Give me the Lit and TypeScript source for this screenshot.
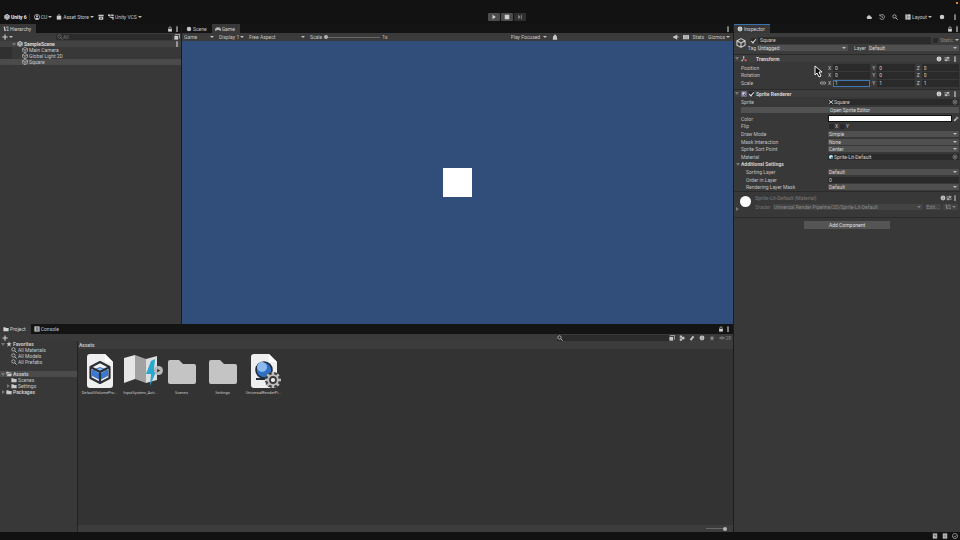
import { LitElement, html, css, svg, nothing, TemplateResult, SVGTemplateResult } from "lit";
import { customElement } from "lit/decorators.js";
import { classMap } from "lit/directives/class-map.js";

const glyphs: Record<string, SVGTemplateResult> = {
  unity: svg`<path d="M8 0 15 4v8l-7 4-7-4V4z" fill="currentColor"/><path d="M8 8V15M8 8 2 4.600M8 8l6-3.400M5 3l3 2 3-2M3 9v3l3 1M13 9v3l-3 1" stroke="#222" stroke-width="1.300" fill="none"/>`,
  user: svg`<circle cx="8" cy="8" r="7" fill="none" stroke="currentColor" stroke-width="1.800"/><circle cx="8" cy="6" r="2.800" fill="currentColor"/><path d="M3 13c1-4 9-4 10 0-2 2.500-8 2.500-10 0z" fill="currentColor"/>`,
  bag: svg`<path d="M2 5h12v10H2z" fill="currentColor"/><path d="M5 6V3q3-3 6 0v3" fill="none" stroke="currentColor" stroke-width="1.800"/>`,
  box: svg`<path d="M1 2h14v4H1zM2 7h12v8H2z" fill="currentColor"/><path d="M8 8v5M5.500 10.500 8 13l2.500-2.500" stroke="#222" stroke-width="1.400" fill="none"/>`,
  branch: svg`<path d="M1 3h9M5 3v6h6" stroke="currentColor" stroke-width="2" fill="none"/><path d="M0 1h5v4H0zM9 1h6v4H9zM9 7h6v8h-3v-4H9z" fill="currentColor"/>`,
  cloud: svg`<path d="M4 13a4 4 0 0 1 0-7 5 5 0 0 1 9 1 3 3 0 0 1 0 6z" fill="currentColor"/>`,
  history: svg`<path d="M3 4a6.500 6.500 0 1 1-1 6M2 1v4h4M8 5v4h3" fill="none" stroke="currentColor" stroke-width="1.800"/>`,
  search: svg`<circle cx="6.500" cy="6.500" r="4.500" fill="none" stroke="currentColor" stroke-width="2"/><path d="m10 10 5 5" stroke="currentColor" stroke-width="2.400"/>`,
  layout: svg`<path d="M1 1h14v14H1z" fill="currentColor"/><path d="M6 1v14M6 8h9" stroke="#333" stroke-width="1.200"/>`,
  dot: svg`<circle cx="8" cy="8" r="6" fill="currentColor"/>`,
  bulb: svg`<path d="M3 6q0-1 2-1V3q3-3 6 0v2q2 0 2 1l1 9H2z" fill="currentColor"/>`,
  kebab: svg`<path d="M6 1h4v3.500H6zM6 6.300h4v3.500H6zM6 11.600h4V15H6z" fill="currentColor"/>`,
  lock: svg`<path d="M3 8h10v7H3z" fill="currentColor"/><path d="M5 8V4q3-4 6 0v4" fill="none" stroke="currentColor" stroke-width="2"/>`,
  tree: svg`<path d="M1 3h5M8 3h7M4 3v9h4M10 8h5M10 12h5M4 8h4" stroke="currentColor" stroke-width="2.200" fill="none"/>`,
  plus: svg`<path d="M8 1v14M1 8h14" stroke="currentColor" stroke-width="3"/>`,
  pad: svg`<path d="M4 4h8c3 0 4 8 2.500 9S12 11 11 10H5c-1 1-2 4-3.500 3S1 4 4 4z" fill="currentColor"/><circle cx="5" cy="7" r="1.200" fill="#333"/><circle cx="11" cy="7" r="1.200" fill="#333"/>`,
  cube: svg`<path d="M8 1 14.500 4.500v7L8 15l-6.500-3.500v-7zM1.500 4.500 8 8l6.500-3.500M8 8v7" fill="none" stroke="currentColor" stroke-width="1.700" stroke-linejoin="round"/>`,
  play: svg`<path d="M4 2l9 6-9 6z" fill="currentColor"/>`,
  stop: svg`<path d="M2 2h12v12H2z" fill="currentColor"/>`,
  step: svg`<path d="M3 2l7 6-7 6zM11 2h2v12h-2z" fill="currentColor"/>`,
  mute: svg`<path d="M1 5h4l6-4v14l-6-4H1z" fill="currentColor"/><path d="M13 5v6" stroke="currentColor" stroke-width="2"/>`,
  keys: svg`<path d="M0 3h16v11H0z" fill="currentColor"/><path d="M2 6h12M2 9h12M4 12h8" stroke="#555" stroke-width="1" stroke-dasharray="2 1"/>`,
  info: svg`<circle cx="8" cy="8" r="6.500" fill="currentColor"/><path d="M8 4v2M8 7.500V12" stroke="#444" stroke-width="1.400"/>`,
  presets: svg`<path d="M1 5h14M1 11h14" stroke="currentColor" stroke-width="2"/><path d="M9 2h3v6H9zM4 8h3v6H4z" fill="currentColor"/>`,
  axes: svg`<path d="M7 2v7" stroke="#bbb" stroke-width="2"/><path d="m7 9-5 4" stroke="#6bd" stroke-width="2"/><path d="m7 9 6 3" stroke="#e65" stroke-width="2"/><path d="M5 1h4v4H5z" fill="#ccc"/><path d="M11 9h4v5h-4z" fill="#e65"/><path d="M1 10h4v4H1z" fill="#bbb"/>`,
  sprite: svg`<path d="M1 1h14v14H1z" fill="#8d86a8"/><path d="M4 4h5v5H4z" fill="#ddd"/><path d="m8 8 5 5" stroke="#334" stroke-width="2"/>`,
  link: svg`<path d="M7 5H4a3 3 0 0 0 0 6h3M9 5h3a3 3 0 0 1 0 6H9M5 8h6" fill="none" stroke="currentColor" stroke-width="2"/>`,
  target: svg`<circle cx="8" cy="8" r="5.500" fill="none" stroke="#8a8a8a" stroke-width="2"/><circle cx="8" cy="8" r="2.500" fill="#8a8a8a"/>`,
  dropper: svg`<path d="m2 14 1-4 5-5 3 3-5 5zM8 3l2-2 5 5-2 2z" fill="currentColor"/>`,
  cross: svg`<path d="m2 3 12 10M14 3 2 13" stroke="currentColor" stroke-width="2.500"/>`,
  ball: svg`<circle cx="8" cy="8" r="5.500" fill="#bfe4ea"/><path d="M8 8h5v5H8z" fill="#4a7f90"/>`,
  star: svg`<path d="m8 1 2 5h5l-4 3.500 1.500 5.500L8 12l-4.500 3L5 9.500 1 6h5z" fill="currentColor"/>`,
  folder: svg`<path d="M1 3h5l2 2h7v9H1z" fill="currentColor"/>`,
  folderOpen: svg`<path d="M1 2h5l2 2h6v2H4L1 12z" fill="currentColor"/><path d="M4.500 7H16l-2.500 7H2z" fill="currentColor"/>`,
  console: svg`<path d="M1 1h14v14H1z" fill="currentColor"/><path d="M5 5h7M5 8h7M5 11h7" stroke="#222" stroke-width="1.500"/>`,
  tag: svg`<path d="M2 12 10 2l4 3-8 10z" fill="currentColor"/>`,
  shapes: svg`<path d="M2 1h6v6H2zM2 9h6v6H2z" fill="currentColor"/><circle cx="11" cy="8" r="4" fill="currentColor"/>`,
  save: svg`<path d="M1 5h10v10H1z" fill="currentColor"/><path d="M4 3V1h11v10h-2" fill="none" stroke="currentColor" stroke-width="2"/>`,
  eye: svg`<path d="M1 8q7-7 14 0-7 7-14 0z" fill="none" stroke="currentColor" stroke-width="2"/><circle cx="8" cy="8" r="2" fill="currentColor"/>`,
  bug: svg`<path d="M2 1h12v14H2z" fill="currentColor"/><path d="m4 4 8 8M10 4v4" stroke="#444" stroke-width="1.600"/>`,
  stack: svg`<path d="M2 1h12v14H2z" fill="currentColor"/><path d="M5 6h6M5 10h6" stroke="#666" stroke-width="1.500"/>`,
  ring: svg`<circle cx="8" cy="8" r="6.800" fill="none" stroke="currentColor" stroke-width="1.800"/><path d="m4.500 8 3 3 4-5" fill="none" stroke="currentColor" stroke-width="1.800"/>`,
};

const icon = (name: string, cls = "") =>
  html`<svg class="ic ${cls}" viewBox="0 0 16 16" aria-hidden="true">${glyphs[name]}</svg>`;

const page = svg`<path d="M6 1h16l8 8v23q0 3-3 3H7q-3 0-3-3V4q0-3 3-3z" fill="#efefef"/><path d="M22 1v8h8z" fill="#fff"/>`;
const gear = (fill: string, w: number, r: number) =>
  svg`<path d="M26 19v16M18 27h16M20.300 21.300l11.400 11.400M31.700 21.300 20.300 32.700" stroke=${fill} stroke-width=${w} stroke-linecap="butt"/><circle cx="26" cy="27" r=${r} fill=${fill}/>`;
const art: Record<string, SVGTemplateResult> = {
  volume: svg`${page}<path d="m17 14 8 3v6l-8 4-8-4v-6z" fill="#3b78cf"/><path d="m17 15 6 2.500L17 21l-6-3.500z" fill="#8fbcf0"/><path d="m17 9 9.500 5v11L17 30l-9.500-5V14zM7.500 14l9.500 5 9.500-5M17 19v11" fill="none" stroke="#2b2f36" stroke-width="2.200" stroke-linejoin="round"/>`,
  input: svg`<path d="M0 5 11 2v24L0 30z" fill="#e6e6e6"/><path d="m11 2 11 4v24l-11-4z" fill="#a2a2a2"/><path d="m22 6 11-3v24l-11 3z" fill="#dedede"/><path d="m27 8 4-2-1 10h3l-7 17 1-12h-5z" fill="#27a9cf"/>`,
  folder: svg`<path d="M3 9q0-2 2-2h9l4 4h11q2 0 2 2v16q0 2-2 2H5q-2 0-2-2z" fill="#c4c4c4"/>`,
  render: svg`${page}<circle cx="17" cy="17" r="8" fill="#2f6fc4" stroke="#222b38" stroke-width="1.600"/><circle cx="15" cy="14" r="5" fill="#8cb9ee"/><path d="M9 26h10" stroke="#222b38" stroke-width="2"/>${gear("#3a3a3a", 5, 7.500)}${gear("#bdbdbd", 2.600, 5.800)}<circle cx="26" cy="27" r="3" fill="#eee" stroke="#3a3a3a" stroke-width="1.800"/>`,
};

const shared = css`
  :host { display: block; min-width: 0; min-height: 0; box-sizing: border-box; }
  * { box-sizing: border-box; }
  .ic { width: 6px; height: 6px; flex: none; display: block; }
  .ic.big { width: 10px; height: 10px; }
  button, input, select { font: inherit; color: inherit; margin: 0; padding: 0; border: 0; background: none; border-radius: 0; outline: none; min-width: 0; }
  button { display: flex; align-items: center; gap: 1px; white-space: nowrap; }
  select { appearance: none; width: 100%; height: 100%; }
  input[type="checkbox"] { appearance: none; width: 5px; height: 5px; background: #2a2a2a; flex: none; display: grid; place-items: center; }
  input[type="checkbox"]:checked::after { content: ""; width: 2px; height: 4px; border: solid #e4e4e4; border-width: 0 1px 1px 0; transform: rotate(40deg); }
  input[type="range"] { appearance: none; height: 5px; background: linear-gradient(#666, #666) center / 100% 1px no-repeat; }
  input[type="range"]::-webkit-slider-thumb { appearance: none; width: 4px; height: 4px; border-radius: 50%; background: #b4b4b4; }
  .caret::after { content: ""; flex: none; border: solid transparent; border-width: 2px 2px 0; border-top-color: #bdbdbd; }
  .pick { display: flex; align-items: center; position: relative; min-width: 0; }
  .pick::after { position: absolute; right: 2px; pointer-events: none; }
  .tabs { display: flex; height: 9px; flex: none; background: #141414; align-items: stretch; }
  .tab { padding: 0 5px 0 3px; gap: 1px; color: #c4c4c4; }
  .tab.on { background: #383838; color: #d2d2d2; }
  .bar { display: flex; height: 8px; flex: none; background: #3a3a3a; align-items: center; }
  .end { margin-left: auto; display: flex; align-items: center; gap: 1px; }
  .fold { width: 4px; flex: none; display: grid; place-items: center; }
  .fold::before { content: ""; border: solid transparent; border-width: 3px 2px 0; border-top-color: #777; }
  .fold.shut::before { border-width: 2px 0 2px 3px; border-color: transparent transparent transparent #777; }
  .fold.none::before { display: none; }
  .row { display: flex; align-items: center; height: 6px; gap: 1px; white-space: nowrap; }
  .row.strong { font-weight: 700; }
  .row.lit { background: #4b4b4b; }
`;

@customElement("tool-bar")
class ToolBar extends LitElement {
  static styles = [shared, css`
    :host { height: 24px; background: #121212; flex: none; }
    .top { display: grid; grid-template-columns: 1fr auto 1fr; align-items: end; height: 24px; padding: 0 2px 3px 4px; position: relative; }
    .side { display: flex; align-items: center; height: 8px; color: #cacaca; }
    .side button { margin-right: 4px; }
    .brand { font-weight: 700; color: #f0f0f0; border-right: 1px solid #333; padding-right: 2px; }
    .right { justify-content: flex-end; }
    .side.right button { margin: 0 0 0 7px; }
    .run { display: flex; gap: 1px; margin-left: 51px; }
    .run button { width: 12px; height: 8px; background: #4c4c4c; justify-content: center; border-radius: 1px; color: #d0d0d0; }
    .run button:last-child { background: #2f2f2f; color: #888; }
    .rec { position: absolute; right: 2px; top: 2px; width: 2px; height: 2px; background: #e08a2c; }
  `];
  render() {
    return html`<header class="top">
      <div class="side">
        <button class="brand">${icon("unity")}Unity 6</button>
        <button class="caret">${icon("user")}CU</button>
        <button class="caret">${icon("bag")}Asset Store</button>
        <button aria-label="Package manager">${icon("box")}</button>
        <button class="caret">${icon("branch")}Unity VCS</button>
      </div>
      <div class="run">
        <button aria-label="Play">${icon("play")}</button>
        <button aria-label="Stop">${icon("stop")}</button>
        <button aria-label="Step">${icon("step")}</button>
      </div>
      <div class="side right">
        <button aria-label="Cloud">${icon("cloud")}</button>
        <button aria-label="History">${icon("history")}</button>
        <button aria-label="Search">${icon("search")}</button>
        <button class="caret">${icon("layout")}Layout</button>
        <button aria-label="Account">${icon("dot")}</button>
        <button aria-label="More">${icon("kebab")}</button>
      </div>
      <span class="rec"></span>
    </header>`;
  }
}

@customElement("hierarchy-panel")
class HierarchyPanel extends LitElement {
  static styles = [shared, css`
    :host { background: #383838; border-right: 1px solid #1a1a1a; }
    .tabs .end, .scene .end { padding-right: 1px; }
    .bar { padding: 0 1px 0 2px; gap: 2px; }
    .find { display: flex; align-items: center; flex: 1; height: 6px; margin-left: 41px; background: #2b2b2b; color: #777; padding-left: 1px; border-radius: 2px; }
    .find input { flex: 1; }
    .find input::placeholder { color: #777; }
    .gutter { background: linear-gradient(90deg, #303030 12px, transparent 12px); }
    .row { padding-left: 22px; color: #c8c8c8; }
    .row.scene { padding-left: 12px; background: #424242; color: #dadada; }
  `];
  render() {
    return html`
      <div class="tabs"><button class="tab on">${icon("tree")}Hierarchy</button>
        <span class="end">${icon("lock")}${icon("kebab")}</span></div>
      <div class="bar"><button class="caret" aria-label="Create">${icon("plus")}</button>
        <label class="find">${icon("search")}<input placeholder="All" aria-label="Search hierarchy" /></label>${icon("save")}</div>
      <div class="gutter">
        <div class="row strong scene"><span class="fold"></span>${icon("unity")}SampleScene<span class="end">${icon("kebab")}</span></div>
        ${["Main Camera", "Global Light 2D", "Square"].map(
          (n) => html`<div class=${classMap({ row: true, lit: n === "Square" })}>${icon("cube")}${n}</div>`)}
      </div>`;
  }
}

@customElement("game-panel")
class GamePanel extends LitElement {
  static styles = [shared, css`
    :host { display: flex; flex-direction: column; }
    .tabs { padding-left: 1px; }
    .tabs .end { padding-right: 2px; }
    .bar { color: #c6c6c6; padding: 0 3px 0 2px; }
    .bar .pick { margin-right: 3px; }
    .w1 { width: 32px; } .w2 { width: 27px; } .w3 { width: 58px; } .w4 { width: 38px; }
    .scale { display: flex; align-items: center; gap: 2px; }
    .scale input { width: 56px; }
    .end { gap: 4px; }
    .focus { display: flex; align-items: center; margin-left: auto; margin-right: 115px; }
    .bar .end { margin-left: 0; }
    .view { flex: 1; background: #314d79; display: grid; place-items: center; }
    .square { width: 29px; height: 29px; background: #fff; }
  `];
  private pick(cls: string, text: string) {
    return html`<span class="pick caret ${cls}"><select aria-label=${text}><option>${text}</option></select></span>`;
  }
  render() {
    return html`
      <div class="tabs"><button class="tab">${icon("dot")}Scene</button><button class="tab on">${icon("pad")}Game</button>
        <span class="end">${icon("kebab")}</span></div>
      <div class="bar">
        ${this.pick("w1", "Game")}${this.pick("w2", "Display 1")}${this.pick("w3", "Free Aspect")}
        <label class="scale">Scale<input type="range" value="0" />1x</label>
        <span class="focus">${this.pick("w4", "Play Focused")}${icon("bulb")}</span>
        <span class="end">${icon("mute")}${icon("keys")}<button>Stats</button><button class="caret">Gizmos</button></span>
      </div>
      <div class="view"><div class="square"></div></div>`;
  }
}

@customElement("project-panel")
class ProjectPanel extends LitElement {
  static styles = [shared, css`
    :host { display: flex; flex-direction: column; background: #383838; }
    .tabs { height: 10px; }
    .tabs .end { padding-right: 2px; }
    .bar { padding: 0 2px; height: 7px; }
    .find { display: flex; align-items: center; width: 112px; height: 6px; background: #2b2b2b; margin-left: auto; }
    .find input { flex: 1; }
    .tools { display: flex; gap: 4px; align-items: center; color: #c4c4c4; }
    .dim { color: #888; display: flex; align-items: center; }
    .body { display: flex; flex: 1; min-height: 0; }
    .side { width: 78px; flex: none; border-right: 1px solid #232323; }
    .side .row { color: #c8c8c8; padding-left: 1px; }
    .side .in1 { padding-left: 6px; }
    .side .gap { margin-top: 6px; }
    .main { flex: 1; display: flex; flex-direction: column; background: #333; min-width: 0; }
    .crumb { height: 8px; background: #3c3c3c; padding-left: 1px; font-weight: 700; color: #c4c4c4; line-height: 9px; }
    .tiles { display: flex; flex: 1; padding: 4px 0 0 1px; }
    .tile { width: 41px; text-align: center; position: relative; font-size: 4px; line-height: 7px; color: #c8c8c8; white-space: nowrap; }
    .tile svg { width: 34px; height: 36px; display: block; margin: 0 auto; }
    .more { position: absolute; left: 34px; top: 13px; width: 9px; height: 9px; border-radius: 50%; background: #b8b8b8; color: #2c2c2c; display: grid; place-items: center; }
    .tile .more svg { width: 5px; height: 5px; }
    .zoom { display: flex; justify-content: flex-end; height: 7px; background: #3c3c3c; padding: 1px 6px; }
    .zoom input { width: 21px; }
  `];
  private item(cls: string, fold: string, ic: string, text: string) {
    return html`<div class="row ${cls}"><span class="fold ${fold}"></span>${icon(ic)}${text}</div>`;
  }
  render() {
    const tiles: [string, string][] = [["volume", "DefaultVolumePro..."], ["input", "InputSystem_Acti..."], ["folder", "Scenes"], ["folder", "Settings"], ["render", "UniversalRenderPi..."]];
    return html`
      <div class="tabs"><button class="tab on">${icon("folder")}Project</button><button class="tab">${icon("console")}Console</button>
        <span class="end">${icon("lock")}${icon("kebab")}</span></div>
      <div class="bar"><button aria-label="Create">${icon("plus")}</button>
        <label class="find">${icon("search")}<input aria-label="Search project" /></label>
        <span class="tools">${icon("save")}${icon("shapes")}${icon("tag")}${icon("info")}<span class="dim">${icon("star")}</span><span class="dim">${icon("eye")}28</span></span></div>
      <div class="body">
        <nav class="side">
          ${this.item("strong", "", "star", "Favorites")}
          ${["All Materials", "All Models", "All Prefabs"].map((t) => this.item("in1", "none", "search", t))}
          ${this.item("strong lit gap", "", "folderOpen", "Assets")}
          ${this.item("in1", "none", "folder", "Scenes")}
          ${this.item("in1", "shut", "folder", "Settings")}
          ${this.item("strong", "shut", "folder", "Packages")}
        </nav>
        <section class="main">
          <div class="crumb">Assets</div>
          <div class="tiles">${tiles.map(([a, t]) => html`<div class="tile">
            <svg viewBox="0 0 34 36" aria-hidden="true">${art[a]}</svg>${t}
            ${a === "input" ? html`<button class="more" aria-label="Expand">${icon("play")}</button>` : nothing}</div>`)}</div>
          <div class="zoom"><input type="range" value="100" aria-label="Icon size" /></div>
        </section>
      </div>`;
  }
}

@customElement("inspector-panel")
class InspectorPanel extends LitElement {
  static styles = [shared, css`
    :host { background: #383838; border-left: 1px solid #1c1c1c; position: relative; }
    .tab.on { border-top: 1px solid #3a72b0; }
    .tabs .end { gap: 1px; }
    .end { gap: 2px; }
    .object { display: flex; gap: 1px; padding: 3px 1px 1px 2px; height: 21px; background: #3c3c3c; }
    .object > .ic { margin-top: 2px; }
    .lines { flex: 1; display: grid; grid-template-rows: 8px 8px; }
    .line { display: flex; align-items: center; gap: 1px; }
    .line .tagl { width: 9px; text-align: right; }
    .line .lay { width: 18px; padding-left: 5px; }
    .line .sel { flex: 1; }
    .who { padding-left: 4px; gap: 2px; }
    .name { flex: 1; height: 7px; background: #2b2b2b; padding-left: 2px; }
    .dim { color: #8a8a8a; display: flex; align-items: center; gap: 2px; }
    .head { display: flex; align-items: center; height: 8px; gap: 2px; padding: 0 2px 0 1px; background: #3e3e3e; border-top: 1px solid #2a2a2a; font-weight: 700; color: #d6d6d6; }
    .head .chk { width: 5px; display: flex; }
    .props { display: grid; grid-auto-rows: 1fr; padding: 0 1px 0 7px; color: #c0c0c0; }
    .xform { height: 23px; margin: 2px 0; }
    .top { height: 16px; margin-top: 1px; }
    .rest { height: 76px; margin-top: 1px; }
    .prop { display: grid; grid-template-columns: 87px 1fr; align-items: center; }
    .key { display: flex; align-items: center; }
    .key .ic { margin-left: auto; margin-right: 2px; }
    .indent { padding-left: 5px; }
    .vec { display: grid; grid-template-columns: repeat(3, 1fr); gap: 2px; }
    .axis { display: flex; align-items: center; gap: 2px; }
    .axis span { width: 3px; }
    .field { flex: 1; width: 100%; height: 6px; background: #2a2a2a; padding-left: 1px; color: #d2d2d2; }
    .axis .field { border: 1px solid #2a2a2a; height: 7px; }
    .axis .active { border-color: #3f78b4; }
    .sel { height: 6px; background: #505050; border-radius: 1px; color: #d8d8d8; }
    .sel select { padding-left: 1px; }
    .ref { display: flex; align-items: center; height: 6px; background: #2a2a2a; color: #d0d0d0; gap: 0; padding-right: 1px; }
    .wide { background: #525252; height: 6px; justify-content: center; color: #dadada; align-self: center; }
    .color { display: flex; align-items: center; gap: 1px; }
    .swatch { flex: 1; height: 7px; background: #fff; border: 1px solid #111; }
    .flip { display: flex; align-items: center; gap: 2px; padding-left: 1px; }
    .flip label { display: flex; align-items: center; gap: 1px; width: 9px; }
    .sub { display: flex; align-items: center; font-weight: 700; color: #d0d0d0; margin-left: -5px; gap: 1px; }
    .mat { display: flex; gap: 2px; height: 27px; padding: 3px 2px 0 6px; border-top: 1px solid #2a2a2a; border-bottom: 1px solid #2a2a2a; color: #707070; position: relative; }
    .mat .fold { position: absolute; left: 1px; top: 15px; }
    .thumb { width: 11px; height: 11px; border-radius: 50%; background: #fff; flex: none; margin-top: 1px; }
    .mt { flex: 1; display: grid; grid-template-rows: 7px 7px; gap: 2px; margin-top: -1px; }
    .mt .line { gap: 2px; }
    .mt .title { padding-left: 2px; font-weight: 500; }
    .mt .ws { padding-left: 2px; width: 18px; }
    .mt .sel, .mt .edit { background: #434343; color: #8c8c8c; height: 6px; }
    .mt .caret::after { border-top-color: #808080; }
    .edit { padding: 0 2px; }
    .mt .end { color: #c0c0c0; gap: 0; }
    .add { width: 86px; height: 8px; margin: 3px auto 0; background: #555; justify-content: center; color: #e0e0e0; }
    .cursor { position: absolute; left: 80px; top: 41px; width: 9px; height: 13px; }
  `];
  private sel(text: string) {
    return html`<span class="pick caret sel"><select aria-label=${text}><option>${text}</option></select></span>`;
  }
  private prop(label: string, body: TemplateResult, indent = false, extra: unknown = nothing) {
    return html`<div class="prop"><span class=${classMap({ key: true, indent })}>${label}${extra}</span>${body}</div>`;
  }
  private vec(label: string, v: string) {
    return this.prop(label, html`<span class="vec">${["X", "Y", "Z"].map((a) => html`<label class="axis"><span>${a}</span>
      <input class=${classMap({ field: true, active: label === "Scale" && a === "X" })} value=${v} /></label>`)}</span>`,
      false, label === "Scale" ? icon("link") : nothing);
  }
  private ref(ic: string, text: string) {
    return html`<button class="ref">${icon(ic)}${text}<span class="end">${icon("target")}</span></button>`;
  }
  render() {
    const ends = html`<span class="end">${icon("info")}${icon("presets")}${icon("kebab")}</span>`;
    return html`
      <div class="tabs"><button class="tab on">${icon("info")}Inspector</button><span class="end">${icon("lock")}${icon("kebab")}</span></div>
      <div class="object">${icon("cube", "big")}
        <div class="lines">
          <div class="line who"><input type="checkbox" checked aria-label="Active" /><input class="name" value="Square" aria-label="Name" />
            <label class="dim caret"><input type="checkbox" />Static</label></div>
          <div class="line"><span class="tagl">Tag</span>${this.sel("Untagged")}<span class="lay">Layer</span>${this.sel("Default")}</div>
        </div>
      </div>
      <div class="head"><span class="fold"></span>${icon("axes")}<span class="chk"></span>Transform${ends}</div>
      <div class="props xform">${this.vec("Position", "0")}${this.vec("Rotation", "0")}${this.vec("Scale", "1")}</div>
      <div class="head"><span class="fold"></span>${icon("sprite")}<span class="chk"><input type="checkbox" checked aria-label="Enabled" /></span>Sprite Renderer${ends}</div>
      <div class="props top">${this.prop("Sprite", this.ref("cross", "Square"))}<button class="wide">Open Sprite Editor</button></div>
      <div class="props rest">
        ${this.prop("Color", html`<span class="color"><button class="swatch" aria-label="Color"></button>${icon("dropper")}</span>`)}
        ${this.prop("Flip", html`<span class="flip"><label><input type="checkbox" />X</label><label><input type="checkbox" />Y</label></span>`)}
        ${this.prop("Draw Mode", this.sel("Simple"))}
        ${this.prop("Mask Interaction", this.sel("None"))}
        ${this.prop("Sprite Sort Point", this.sel("Center"))}
        ${this.prop("Material", this.ref("ball", "Sprite-Lit-Default"))}
        <div class="sub"><span class="fold"></span>Additional Settings</div>
        ${this.prop("Sorting Layer", this.sel("Default"), true)}
        ${this.prop("Order in Layer", html`<input class="field" value="0" aria-label="Order in Layer" />`, true)}
        ${this.prop("Rendering Layer Mask", this.sel("Default"), true)}
      </div>
      <div class="mat"><span class="fold shut"></span><span class="thumb"></span>
        <div class="mt">
          <div class="line title">Sprite-Lit-Default (Material)${ends}</div>
          <div class="line"><span class="ws">Shader</span>${this.sel("Universal Render Pipeline/2D/Sprite-Lit-Default")}
            <button class="edit">Edit...</button><button class="edit caret">${icon("tree")}</button></div>
        </div>
      </div>
      <button class="add">Add Component</button>
      <svg class="cursor" viewBox="0 0 9 13" aria-hidden="true"><path d="M1 1v9l2-2 2 4 2-1-2-4h3z" fill="#111" stroke="#f4f4f4" stroke-width="1"/></svg>`;
  }
}

@customElement("app-root")
class AppRoot extends LitElement {
  static styles = [shared, css`
    :host { display: flex; flex-direction: column; height: 100vh; overflow: hidden; background: #121212; color: #cecece; font: 5px/6px Roboto, "Liberation Sans", sans-serif; }
    .work { flex: 1; min-height: 0; display: grid; grid-template-columns: minmax(0, 1fr) 227px; }
    .left { display: grid; grid-template-rows: minmax(0, 300fr) minmax(0, 208fr); min-height: 0; }
    .upper { display: grid; grid-template-columns: 182px minmax(0, 1fr); min-height: 0; }
    .status { height: 8px; flex: none; display: flex; justify-content: flex-end; align-items: center; gap: 4px; padding-right: 2px; color: #b8b8b8; background: #111; }
  `];
  render() {
    return html`<tool-bar></tool-bar>
      <main class="work">
        <div class="left">
          <div class="upper"><hierarchy-panel></hierarchy-panel><game-panel></game-panel></div>
          <project-panel></project-panel>
        </div>
        <inspector-panel></inspector-panel>
      </main>
      <footer class="status">${icon("bug")}${icon("stack")}${icon("ring")}</footer>`;
  }
}
